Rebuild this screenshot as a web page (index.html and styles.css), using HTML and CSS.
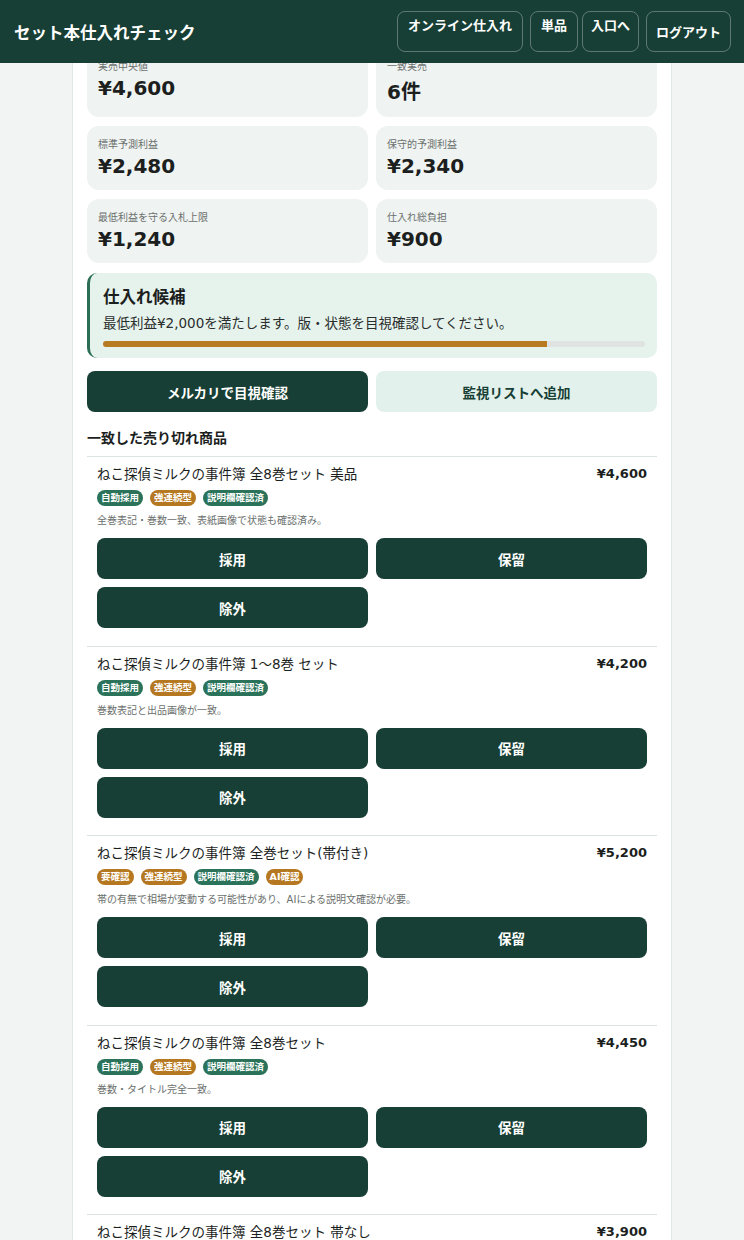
FILE: index.html
```html
<!DOCTYPE html>
<html lang="ja">
<head>
  <meta charset="UTF-8">
  <title>セット本仕入れチェック</title>
  <link rel="stylesheet" href="styles.css">
</head>
<body>
  <header class="topbar">
    <div class="brand">セット本仕入れチェック</div>
    <nav class="nav">
      <a class="nav-link" href="#">オンライン仕入れ</a>
      <a class="nav-link" href="#">単品</a>
      <a class="nav-link nav-link-tight" href="#">入口へ</a>
      <button class="nav-btn" type="button">ログアウト</button>
    </nav>
  </header>

  <main class="container">
    <section class="stats">
      <div class="stat">
        <div class="stat-label">実売中央値</div>
        <div class="stat-value">¥4,600</div>
      </div>
      <div class="stat">
        <div class="stat-label">一致実売</div>
        <div class="stat-value">6件</div>
      </div>
      <div class="stat">
        <div class="stat-label">標準予測利益</div>
        <div class="stat-value">¥2,480</div>
      </div>
      <div class="stat">
        <div class="stat-label">保守的予測利益</div>
        <div class="stat-value">¥2,340</div>
      </div>
      <div class="stat">
        <div class="stat-label">最低利益を守る入札上限</div>
        <div class="stat-value">¥1,240</div>
      </div>
      <div class="stat">
        <div class="stat-label">仕入れ総負担</div>
        <div class="stat-value">¥900</div>
      </div>
    </section>

    <section class="verdict">
      <h3>仕入れ候補</h3>
      <p>最低利益¥2,000を満たします。版・状態を目視確認してください。</p>
      <div class="meter"><div class="meter-fill" style="width: 82%"></div></div>
    </section>

    <div class="actions">
      <button class="btn btn-primary" type="button">メルカリで目視確認</button>
      <button class="btn btn-soft" type="button">監視リストへ追加</button>
    </div>

    <h2 class="section-title">一致した売り切れ商品</h2>

    <ul class="items">
      <li class="item">
        <div class="item-head">
          <span class="item-title">ねこ探偵ミルクの事件簿 全8巻セット 美品</span>
          <span class="item-price">¥4,600</span>
        </div>
        <div class="tags">
          <span class="tag tag-ok">自動採用</span>
          <span class="tag tag-warn">強連続型</span>
          <span class="tag tag-ok">説明欄確認済</span>
        </div>
        <p class="item-note">全巻表記・巻数一致、表紙画像で状態も確認済み。</p>
        <div class="item-actions">
          <button class="btn btn-primary" type="button">採用</button>
          <button class="btn btn-primary" type="button">保留</button>
          <button class="btn btn-primary" type="button">除外</button>
        </div>
      </li>
      <li class="item">
        <div class="item-head">
          <span class="item-title">ねこ探偵ミルクの事件簿 1〜8巻 セット</span>
          <span class="item-price">¥4,200</span>
        </div>
        <div class="tags">
          <span class="tag tag-ok">自動採用</span>
          <span class="tag tag-warn">強連続型</span>
          <span class="tag tag-ok">説明欄確認済</span>
        </div>
        <p class="item-note">巻数表記と出品画像が一致。</p>
        <div class="item-actions">
          <button class="btn btn-primary" type="button">採用</button>
          <button class="btn btn-primary" type="button">保留</button>
          <button class="btn btn-primary" type="button">除外</button>
        </div>
      </li>
      <li class="item">
        <div class="item-head">
          <span class="item-title">ねこ探偵ミルクの事件簿 全巻セット(帯付き)</span>
          <span class="item-price">¥5,200</span>
        </div>
        <div class="tags">
          <span class="tag tag-warn">要確認</span>
          <span class="tag tag-warn">強連続型</span>
          <span class="tag tag-ok">説明欄確認済</span>
          <span class="tag tag-warn">AI確認</span>
        </div>
        <p class="item-note">帯の有無で相場が変動する可能性があり、AIによる説明文確認が必要。</p>
        <div class="item-actions">
          <button class="btn btn-primary" type="button">採用</button>
          <button class="btn btn-primary" type="button">保留</button>
          <button class="btn btn-primary" type="button">除外</button>
        </div>
      </li>
      <li class="item">
        <div class="item-head">
          <span class="item-title">ねこ探偵ミルクの事件簿 全8巻セット</span>
          <span class="item-price">¥4,450</span>
        </div>
        <div class="tags">
          <span class="tag tag-ok">自動採用</span>
          <span class="tag tag-warn">強連続型</span>
          <span class="tag tag-ok">説明欄確認済</span>
        </div>
        <p class="item-note">巻数・タイトル完全一致。</p>
        <div class="item-actions">
          <button class="btn btn-primary" type="button">採用</button>
          <button class="btn btn-primary" type="button">保留</button>
          <button class="btn btn-primary" type="button">除外</button>
        </div>
      </li>
      <li class="item">
        <div class="item-head">
          <span class="item-title">ねこ探偵ミルクの事件簿 全8巻セット 帯なし</span>
          <span class="item-price">¥3,900</span>
        </div>
        <div class="tags">
          <span class="tag tag-warn">要確認</span>
          <span class="tag tag-warn">強連続型</span>
        </div>
        <p class="item-note">帯なしのため相場より安値。</p>
        <div class="item-actions">
          <button class="btn btn-primary" type="button">採用</button>
          <button class="btn btn-primary" type="button">保留</button>
          <button class="btn btn-primary" type="button">除外</button>
        </div>
      </li>
    </ul>
  </main>
</body>
</html>
```

FILE: styles.css
```css
* {
  box-sizing: border-box;
}
body {
  margin: 0;
  padding-top: 34px;
  font-family: "DejaVu Sans", "Noto Sans CJK JP", sans-serif;
  background: #f1f4f3;
  color: #1c1f1e;
}

/* top bar stays over the page while scrolling */
.topbar {
  position: fixed;
  top: 0;
  left: 0;
  right: 0;
  z-index: 10;
  height: 63px;
  padding: 0 13px 0 14px;
  display: flex;
  align-items: center;
  justify-content: space-between;
  background: #173f35;
  color: #fff;
}
.brand {
  font-size: 16.5px;
  font-weight: bold;
}
.nav {
  display: flex;
  gap: 7px;
}
.nav-link,
.nav-btn {
  height: 41px;
  padding: 0 10px;
  border: 1px solid rgba(255,255,255,0.3);
  border-radius: 8px;
  background: transparent;
  color: #fff;
  font-family: inherit;
  font-size: 13px;
  font-weight: bold;
  text-decoration: none;
}
.nav-link {
  display: block;
  padding-top: 5px;
  line-height: 18px;
}
.nav-link-tight {
  margin-left: -3px;
  padding: 5px 8px 0;
}
.nav-btn {
  padding: 0 9px;
  cursor: pointer;
}

.container {
  max-width: 600px;
  margin: 0 auto;
  background: #fff;
  border: 1px solid #e1e7e4;
  padding: 13px 14px 20px;
}

.stats {
  display: grid;
  grid-template-columns: 1fr 1fr;
  gap: 9px 8px;
}
.stat {
  padding: 10px 11px 12px;
  background: #eff3f1;
  border-radius: 12px;
}
.stat-label {
  font-size: 10px;
  color: #6b706e;
}
.stat-value {
  margin-top: 3px;
  font-size: 20px;
  font-weight: bold;
}

.verdict {
  margin-top: 10px;
  padding: 14px 12px 11px 13px;
  background: #e6f3ec;
  border-left: 3px solid #2b6e55;
  border-radius: 10px;
}
.verdict h3 {
  margin: 0;
  font-size: 16.5px;
  line-height: 22px;
}
.verdict p {
  margin: 4px 0 0;
  font-size: 13.5px;
  line-height: 20px;
  color: #2a2e2c;
}
.meter {
  margin-top: 8px;
  height: 6px;
  background: #dfe4e2;
  border-radius: 3px;
  overflow: hidden;
}
.meter-fill {
  height: 100%;
  background: #b87b22;
}

.actions {
  margin-top: 13px;
  display: grid;
  grid-template-columns: 1fr 1fr;
  gap: 8px;
}
.btn {
  height: 41px;
  border: none;
  border-radius: 8px;
  font-family: inherit;
  font-size: 13.5px;
  font-weight: bold;
  cursor: pointer;
}
.btn-primary {
  background: #173f35;
  color: #fff;
}
.btn-soft {
  background: #e3f1ec;
  color: #173f35;
}

.section-title {
  margin: 16px 0 8px;
  font-size: 14px;
  line-height: 20px;
}

.items {
  list-style: none;
  margin: 0;
  padding: 0;
}
.item {
  border-top: 1px solid #dde3e0;
  padding: 7px 10px 17.5px;
}
.item-head {
  display: flex;
  justify-content: space-between;
  align-items: center;
  line-height: 20px;
}
.item-title {
  font-size: 13.5px;
}
.item-price {
  font-size: 13px;
  font-weight: bold;
}
.tags {
  margin-top: 6px;
  display: flex;
  gap: 7px;
}
.tag {
  height: 16px;
  padding: 0 4px;
  border-radius: 8px;
  font-size: 9.5px;
  line-height: 16px;
  font-weight: bold;
  color: #fff;
}
.tag-ok {
  background: #2a7259;
}
.tag-warn {
  background: #b5771f;
}
.item-note {
  margin: 8px 0 0;
  font-size: 10px;
  line-height: 14px;
  color: #6b706e;
}
.item-actions {
  margin-top: 10px;
  display: grid;
  grid-template-columns: 1fr 1fr;
  gap: 8px;
}
```
